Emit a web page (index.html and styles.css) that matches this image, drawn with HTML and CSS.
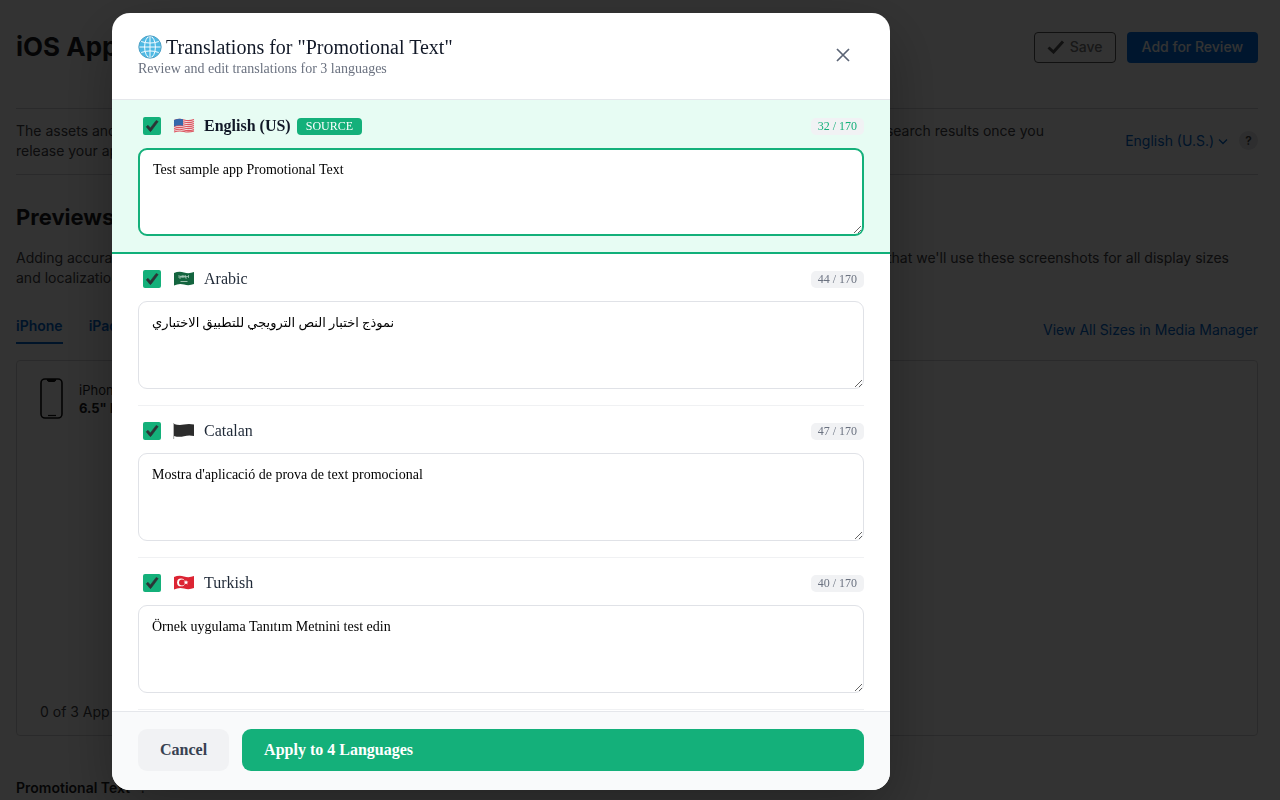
FILE: index.html
```html
<!DOCTYPE html>
<html lang="en">
<head>
<meta charset="utf-8">
<meta name="viewport" content="width=device-width, initial-scale=1">
<title>Translations</title>
<link rel="stylesheet" href="styles.css">
</head>
<body>
<svg class="defs" aria-hidden="true">
  <symbol id="tick" viewBox="0 0 18 18"><path d="M3.2 9.8 5 8.3 7.4 10.9 13.2 3.4 15.2 4.6 8 14.2Q7.4 14.8 6.9 14.2Z" fill="#2b3436" stroke="#2b3436" stroke-width=".6" stroke-linejoin="round"/></symbol>
</svg>

<main class="page">
  <header class="page-head">
    <h1>iOS App</h1>
    <div class="actions">
      <button class="btn btn-save" type="button"><svg width="18" height="14" viewBox="0 0 18 14"><path d="M1.5 7.5 6.5 12 16 1.5" fill="none" stroke="currentColor" stroke-width="3"/></svg>Save</button>
      <button class="btn btn-review" type="button">Add for Review</button>
    </div>
  </header>

  <section class="notice">
    <p class="notice-text"><span class="line"><span>The assets and</span> <span>search results once you</span></span>release your app.</p>
    <div class="locale">
      <a href="#">English (U.S.) <svg width="10" height="8" viewBox="0 0 10 8"><path d="M1 1.5 5 5.5 9 1.5" fill="none" stroke="currentColor" stroke-width="1.3"/></svg></a>
      <button class="help" type="button">?</button>
    </div>
  </section>

  <section class="previews">
    <h2>Previews</h2>
    <p class="previews-text"><span class="line"><span>Adding accurate</span> <span>that we'll use these screenshots for all display sizes</span></span>and localizations</p>
    <nav class="tabs">
      <a class="tab current" href="#">iPhone</a>
      <a class="tab" href="#">iPad</a>
      <a class="all-sizes" href="#">View All Sizes in Media Manager</a>
    </nav>
    <div class="drop">
      <div class="device">
        <svg width="24" height="42" viewBox="0 0 24 42" fill="none" stroke="#111"><rect x="1" y="1" width="21" height="39" rx="4" stroke-width="1.6"/><path d="M7 1.5Q7.5 3.5 9 3.5H14Q15.5 3.5 16 1.5Z" fill="#111"/><path d="M8 37.5H16" stroke-width="1.2"/></svg>
        <div>iPhone<br><b>6.5" Display</b></div>
      </div>
      <div class="quota">0 of 3 App</div>
    </div>
  </section>
  <h3>Promotional Text <span>?</span></h3>
</main>

<div class="overlay">
  <div class="dialog" role="dialog" aria-modal="true" aria-labelledby="title">
    <header class="dialog-head">
      <div class="heading">
        <h2 id="title" class="title"><svg width="24" height="24" viewBox="0 0 24 24" fill="none"><circle cx="12" cy="12" r="11" fill="#4fb9e3"/><g stroke="#f4fbff" stroke-width="1"><path d="M12 1V23M1 12H23M3.2 6.5Q12 9.6 20.8 6.5M3.2 17.5Q12 14.4 20.8 17.5"/><ellipse cx="12" cy="12" rx="5.4" ry="10.8"/></g><circle cx="12" cy="12" r="11.2" stroke="#4c9fc4" stroke-width="1"/></svg>Translations for "Promotional Text"</h2>
        <p class="subtitle">Review and edit translations for 3 languages</p>
      </div>
      <button class="close" type="button" aria-label="Close"><svg width="14" height="14" viewBox="0 0 14 14"><path d="M1 1 13 13M13 1 1 13" stroke="currentColor" stroke-width="1.7"/></svg></button>
    </header>

    <div class="dialog-body">
      <section class="lang source">
        <div class="lang-head">
          <span class="check"><input type="checkbox" id="c-en" checked><svg><use href="#tick"/></svg></span>
          <svg class="flag" viewBox="0 0 22 18"><path d="M1 3Q6 1 11 2.5T21 2V14Q16 16 11 14.5T1 15.5Z" fill="#f3e9ea"/><g fill="none" stroke="#dc5660" stroke-width="1.1"><path d="M1 3.5Q6 1.5 11 3T21 2.5M1 5.5Q6 3.5 11 5T21 4.5M1 7.5Q6 5.5 11 7T21 6.5M1 9.5Q6 7.5 11 9T21 8.5M1 11.5Q6 9.5 11 11T21 10.5M1 13.3Q6 11.5 11 13T21 12.4M1 15Q6 13.2 11 14.5T21 13.9"/></g><path d="M1 3Q6 1 10 2.2V8.8Q6 7.5 1 9.6Z" fill="#3568ab"/></svg>
          <label for="c-en">English (US)</label>
          <span class="badge">SOURCE</span>
          <span class="count">32 / 170</span>
        </div>
        <textarea aria-label="English (US) text">Test sample app Promotional Text</textarea>
      </section>
      <section class="lang">
        <div class="lang-head">
          <span class="check"><input type="checkbox" id="c-ar" checked><svg><use href="#tick"/></svg></span>
          <svg class="flag" viewBox="0 0 22 18"><path d="M1 3Q6 1 11 2.5T21 2V14Q16 16 11 14.5T1 15.5Z" fill="#14653f"/><path d="M6 5V8H8V5.5M9.3 5V8M10.8 8V5M12.3 5V8H14M15.5 5V8M6.5 6.5H15.5" fill="none" stroke="#b9d4c5" stroke-width=".7"/><path d="M7.5 11.5H14.5" stroke="#b9d4c5" stroke-width=".8"/></svg>
          <label for="c-ar">Arabic</label>
          <span class="count">44 / 170</span>
        </div>
        <textarea class="arabic" lang="ar" aria-label="Arabic text">نموذج اختبار النص الترويجي للتطبيق الاختباري</textarea>
      </section>
      <section class="lang">
        <div class="lang-head">
          <span class="check"><input type="checkbox" id="c-ca" checked><svg><use href="#tick"/></svg></span>
          <svg class="flag" viewBox="0 0 22 18"><path d="M.7 1V17" stroke="#999" stroke-width=".9"/><path d="M1 2Q6 3.6 11 2.5T21 2.5V14Q16 12.8 11 14.2T1 14Z" fill="#2c2c2c"/></svg>
          <label for="c-ca">Catalan</label>
          <span class="count">47 / 170</span>
        </div>
        <textarea lang="ca" aria-label="Catalan text">Mostra d'aplicació de prova de text promocional</textarea>
      </section>
      <section class="lang">
        <div class="lang-head">
          <span class="check"><input type="checkbox" id="c-tr" checked><svg><use href="#tick"/></svg></span>
          <svg class="flag" viewBox="0 0 22 18"><path d="M1 3Q6 1 11 2.5T21 2V14Q16 16 11 14.5T1 15.5Z" fill="#dc2433"/><circle cx="8" cy="8.4" r="3.9" fill="#fff"/><circle cx="9" cy="8.4" r="3" fill="#dc2433"/><path d="m13 6 .7 1.6 1.8.1-1.4 1.1.5 1.7-1.6-1-1.5 1 .4-1.7-1.3-1.1 1.7-.1z" fill="#fff"/></svg>
          <label for="c-tr">Turkish</label>
          <span class="count">40 / 170</span>
        </div>
        <textarea lang="tr" aria-label="Turkish text">Örnek uygulama Tanıtım Metnini test edin</textarea>
      </section>
    </div>

    <footer class="dialog-foot">
      <button class="cancel" type="button">Cancel</button>
      <button class="apply" type="button">Apply to 4 Languages</button>
    </footer>
  </div>
</div>
</body>
</html>
```

FILE: styles.css
```css
* { box-sizing: border-box; }
body { margin: 0; overflow: hidden; background: #fff; color: #1d1d1f; font: 14px/20px Inter, "Liberation Sans", sans-serif; }
h1, h2, h3, p { margin: 0; }
button { font: inherit; cursor: pointer; }
a { color: #0066cc; text-decoration: none; }
.defs { display: none; }

.page { height: 100vh; overflow: hidden; padding: 0 22px 0 16px; }
.page-head { display: flex; justify-content: space-between; align-items: center; height: 108px; padding-bottom: 14px; }
h1 { font-size: 26px; line-height: 32px; }
.actions { display: flex; gap: 11px; }
.btn { display: flex; align-items: center; gap: 5px; height: 31px; padding: 0 15px; border-radius: 4px; font-weight: 500; }
.btn-save { background: #fff; border: 1px solid #555; color: #777; padding: 0 12px; }
.btn-save svg { color: #555; }
.btn-review { background: #0071e3; border: 0; color: #fff; }

.notice { display: flex; justify-content: space-between; align-items: center; height: 67px; padding-bottom: 2px; border: solid #d2d2d7; border-width: 1px 0; color: #424245; white-space: nowrap; }
.line { display: flex; justify-content: space-between; }
.notice-text { flex: 1; max-width: 1028px; }
.locale { display: flex; align-items: center; gap: 11px; }
.help { width: 19px; height: 19px; padding: 0; border: 0; border-radius: 50%; background: #e5e5e8; color: #444; font-size: 12px; font-weight: 600; line-height: 19px; }

.previews h2 { margin-top: 28px; font-size: 22px; line-height: 28px; }
.previews-text { max-width: 1213px; margin-top: 17px; color: #424245; white-space: nowrap; }
.tabs { display: flex; gap: 26px; height: 56px; align-items: flex-end; font-weight: 600; }
.tab { height: 28px; }
.tab.current { border-bottom: 2px solid #0066cc; }
.all-sizes { margin-left: auto; height: 24px; font-weight: 400; }
.drop { display: flex; flex-direction: column; justify-content: space-between; height: 376px; margin-top: 16px; padding: 17px 23px 13px; border: 1px solid #d2d2d7; border-radius: 4px; }
.device { display: flex; align-items: center; gap: 15px; font-size: 13px; line-height: 18px; }
.quota { color: #424245; }
h3 { margin-top: 42px; font-size: 14px; font-weight: 600; line-height: 20px; }
h3 span { margin-left: 6px; font-size: 12px; }

.overlay { position: fixed; inset: 0; display: flex; justify-content: center; padding: 13px 278px 10px 0; background: rgba(0, 0, 0, .8); color: #1f2937; font-family: "Liberation Serif", serif; }
.dialog { display: flex; flex-direction: column; width: 100%; max-width: 778px; overflow: hidden; border-radius: 18px; background: #fff; box-shadow: 0 20px 60px rgba(0, 0, 0, .3); }
.dialog-head { display: flex; justify-content: space-between; align-items: center; height: 87px; padding: 0 27px 2px 26px; border-bottom: 1px solid #e5e7eb; }
.heading { padding-top: 4px; }
.title { display: flex; align-items: center; gap: 4px; font-size: 20px; font-weight: 400; line-height: 24px; color: #111827; }
.subtitle { font-size: 14px; line-height: 20px; color: #6b7280; }
.close { display: grid; place-items: center; width: 40px; height: 40px; padding: 0; border: 0; background: none; color: #5b6475; }

.dialog-body { flex: 1; min-height: 0; overflow: hidden; padding: 0 26px; }
.lang { padding: 14px 0 16px; border-bottom: 1px solid #f0f1f3; }
.lang.source { margin: 0 -26px; padding: 15px 26px 16px; background: #e7fcf3; border-bottom: 2px solid #10b07a; }
.lang-head { display: flex; align-items: center; height: 22px; margin-bottom: 11px; padding-left: 5px; font-size: 16px; }
.check { display: grid; width: 18px; height: 18px; margin-right: 12px; }
.check input, .check svg { grid-area: 1 / 1; width: 18px; height: 18px; margin: 0; }
.check input { appearance: none; border-radius: 2px; background: #14b07a; }
.check svg { z-index: 1; pointer-events: none; }
.check input:not(:checked) + svg { visibility: hidden; }
.flag { width: 22px; height: 18px; margin-right: 9px; }
.source label { font-weight: 700; color: #111827; }
.badge { margin-left: 6px; padding: 0 9px; border-radius: 4px; background: #14b07a; color: #fff; font-size: 12px; line-height: 17px; }
.count { margin-left: auto; padding: 0 7px; border-radius: 5px; background: #f1f2f4; color: #6b7280; font-size: 12px; line-height: 17px; }
.source .count { color: #14b07a; }
textarea { display: block; width: 100%; height: 88px; padding: 11px 13px; border: 1px solid #e0e2e7; border-radius: 9px; background: #fff; color: #000; font: 14px/20px "Liberation Serif", "DejaVu Sans", serif; resize: vertical; }
.source textarea { border: 2px solid #14b07a; padding: 10px 13px; }
textarea.arabic { font-size: 13px; }

.dialog-foot { display: flex; gap: 13px; padding: 17px 26px 19px; border-top: 1px solid #e5e7eb; background: #f9fafb; }
.dialog-foot button { height: 42px; border: 0; border-radius: 9px; padding: 0 22px; font-size: 16px; font-weight: 700; text-align: left; }
.cancel { background: #f1f2f4; color: #374151; }
.apply { flex: 1; background: #14b07a; color: #fff; }
```
